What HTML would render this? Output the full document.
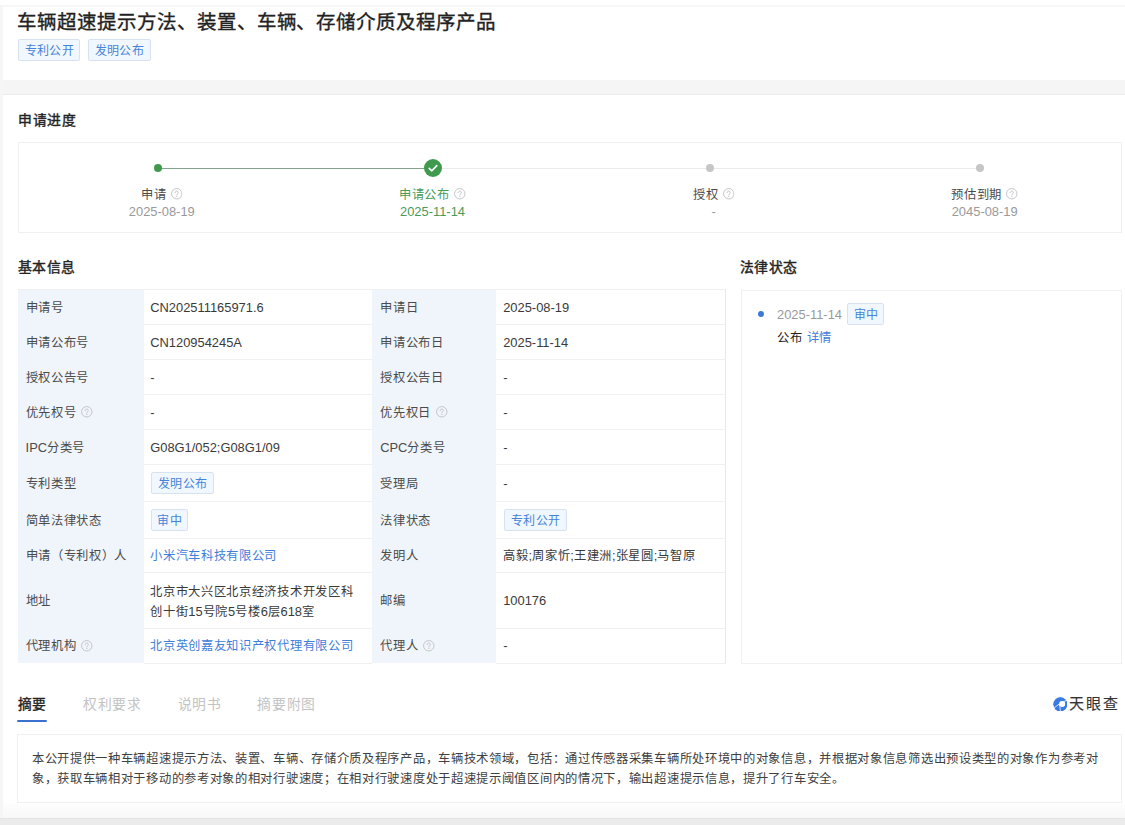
<!DOCTYPE html>
<html lang="zh-CN">
<head>
<meta charset="utf-8">
<title>车辆超速提示方法、装置、车辆、存储介质及程序产品</title>
<style>
*{margin:0;padding:0;box-sizing:border-box}
html,body{width:1125px;height:825px;overflow:hidden;background:#fff}
body{position:relative;font-family:"Liberation Sans",sans-serif;font-size:12.9px;color:#333}
.a{position:absolute;white-space:nowrap;line-height:16px}
.t{position:absolute;white-space:nowrap;line-height:16px}
.cj{font-size:12.3px;letter-spacing:0.7px}
.lt{font-size:12.9px;letter-spacing:0}
.strip-top{position:absolute;left:0;top:4.5px;width:1125px;height:2.5px;background:#f7f7f7}
.strip-left{position:absolute;left:0;top:4.5px;width:2.5px;height:821px;background:#f6f6f6}
.band{position:absolute;left:2.5px;top:80px;width:1123px;height:14.5px;background:#f5f5f5;border-bottom:1px solid #ebebeb}
.band-bot{position:absolute;left:0;top:817.5px;width:1125px;height:7.5px;background:#ebebeb;border-top:1px solid #e4e4e4}
.shade-bot{position:absolute;left:2.5px;top:803.5px;width:1123px;height:14px;background:linear-gradient(#fdfdfd,#f8f8f8)}
.title{font-size:19.5px;letter-spacing:-0.05px;font-weight:400;color:#222;line-height:24px;-webkit-text-stroke:0.35px #222}
.tag{position:absolute;height:21.4px;line-height:22.6px;text-align:center;border:1px solid #d8e2ef;background:#f1f7fe;color:#4583d8;border-radius:2px;font-size:12px;letter-spacing:0.35px;text-indent:0.35px;white-space:nowrap}
.h{font-size:13.8px;font-weight:400;color:#222;line-height:18px;letter-spacing:0.5px;-webkit-text-stroke:0.4px #222}
.box{position:absolute;border:1px solid #f0f0f0;background:#fff}
.dot{position:absolute;border-radius:50%}
.pl{position:absolute;height:1px}
.qi{position:absolute}
.lb{position:absolute;background:#f0f5fb}
.hl{position:absolute;height:1px;background:#f0f0f0}
.vl{position:absolute;width:1px;background:#e8e8e8}
.lbl{color:#4b4b4b}
.val{color:#3a3a3a}
.gray{color:#999}
.green{color:#4a9a59}
.link{color:#3f7ed8}
.tab{position:absolute;white-space:nowrap;font-size:13.8px;letter-spacing:0.7px;line-height:18px;color:#c3c3c3}
</style>
</head>
<body>
<div class="strip-top"></div>
<div class="strip-left"></div>
<div class="band"></div>
<div class="shade-bot"></div>
<div class="band-bot"></div>

<!-- title card -->
<div class="a title" style="left:17.2px;top:10.3px">车辆超速提示方法、装置、车辆、存储介质及程序产品</div>
<div class="tag" style="left:17.9px;top:39.3px;width:62.5px">专利公开</div>
<div class="tag" style="left:87.9px;top:39.3px;width:62.7px">发明公布</div>

<!-- progress -->
<div class="a h" style="left:18px;top:112px">申请进度</div>
<div class="box" style="left:17.5px;top:141.7px;width:1104.5px;height:91.8px"></div>
<div class="pl" style="left:157.5px;top:167.5px;width:276px;background:#86a38f"></div>
<div class="pl" style="left:433.6px;top:167.5px;width:546.4px;background:#eaeaea"></div>
<div class="dot" style="left:153.5px;top:164px;width:8px;height:8px;background:#3f9a4e"></div>
<div class="dot" style="left:705.6px;top:164px;width:8px;height:8px;background:#c6c6c6"></div>
<div class="dot" style="left:976px;top:164px;width:8px;height:8px;background:#c6c6c6"></div>
<svg style="position:absolute;left:424.2px;top:159px" width="18" height="18" viewBox="0 0 18 18"><circle cx="9" cy="9" r="9" fill="#3f9a4e"/><path d="M5.2 9.3 L7.9 11.8 L12.8 6.6" fill="none" stroke="#fff" stroke-width="1.6" stroke-linecap="round" stroke-linejoin="round"/></svg>
<div class="t lbl cj" style="left:141.10px;top:187.00px;">申请</div>
<svg class="qi" style="left:170.75px;top:188.05px" width="11.5" height="11.5" viewBox="0 0 23 23"><circle cx="11.5" cy="11.5" r="10.4" fill="none" stroke="#c3c5c9" stroke-width="2"/><path d="M8.4 9.3 C8.4 7.3 9.8 6.2 11.5 6.2 C13.3 6.2 14.6 7.4 14.6 9 C14.6 11.2 11.8 11.4 11.8 13.9" fill="none" stroke="#c3c5c9" stroke-width="2" stroke-linecap="round"/><circle cx="11.8" cy="16.8" r="1.25" fill="#c3c5c9"/></svg>
<div class="t gray" style="left:101.80px;top:204.10px;width:120px;text-align:center">2025-08-19</div>
<div class="t green cj" style="left:399.10px;top:187.00px;">申请公布</div>
<svg class="qi" style="left:454.15px;top:188.05px" width="11.5" height="11.5" viewBox="0 0 23 23"><circle cx="11.5" cy="11.5" r="10.4" fill="none" stroke="#c3c5c9" stroke-width="2"/><path d="M8.4 9.3 C8.4 7.3 9.8 6.2 11.5 6.2 C13.3 6.2 14.6 7.4 14.6 9 C14.6 11.2 11.8 11.4 11.8 13.9" fill="none" stroke="#c3c5c9" stroke-width="2" stroke-linecap="round"/><circle cx="11.8" cy="16.8" r="1.25" fill="#c3c5c9"/></svg>
<div class="t green" style="left:372.50px;top:204.10px;width:120px;text-align:center">2025-11-14</div>
<div class="t lbl cj" style="left:692.90px;top:187.00px;">授权</div>
<svg class="qi" style="left:722.55px;top:188.05px" width="11.5" height="11.5" viewBox="0 0 23 23"><circle cx="11.5" cy="11.5" r="10.4" fill="none" stroke="#c3c5c9" stroke-width="2"/><path d="M8.4 9.3 C8.4 7.3 9.8 6.2 11.5 6.2 C13.3 6.2 14.6 7.4 14.6 9 C14.6 11.2 11.8 11.4 11.8 13.9" fill="none" stroke="#c3c5c9" stroke-width="2" stroke-linecap="round"/><circle cx="11.8" cy="16.8" r="1.25" fill="#c3c5c9"/></svg>
<div class="t gray" style="left:653.60px;top:204.10px;width:120px;text-align:center">-</div>
<div class="t lbl cj" style="left:951.30px;top:187.00px;">预估到期</div>
<svg class="qi" style="left:1006.35px;top:188.05px" width="11.5" height="11.5" viewBox="0 0 23 23"><circle cx="11.5" cy="11.5" r="10.4" fill="none" stroke="#c3c5c9" stroke-width="2"/><path d="M8.4 9.3 C8.4 7.3 9.8 6.2 11.5 6.2 C13.3 6.2 14.6 7.4 14.6 9 C14.6 11.2 11.8 11.4 11.8 13.9" fill="none" stroke="#c3c5c9" stroke-width="2" stroke-linecap="round"/><circle cx="11.8" cy="16.8" r="1.25" fill="#c3c5c9"/></svg>
<div class="t gray" style="left:924.70px;top:204.10px;width:120px;text-align:center">2045-08-19</div>

<div class="a h" style="left:17.5px;top:259px">基本信息</div>
<div class="a h" style="left:739.7px;top:259px">法律状态</div>

<div class="lb" style="left:18.0px;top:289.2px;width:125.80px;height:373.80px"></div>
<div class="lb" style="left:372.0px;top:289.2px;width:124.00px;height:373.80px"></div>
<div class="hl" style="left:18.0px;top:288.70px;width:707.80px"></div>
<div class="vl" style="left:724.80px;top:289.2px;height:373.80px"></div>
<div class="hl" style="left:143.8px;top:324.10px;width:228.20px"></div>
<div class="hl" style="left:496.0px;top:324.10px;width:229.80px"></div>
<div class="hl" style="left:143.8px;top:359.00px;width:228.20px"></div>
<div class="hl" style="left:496.0px;top:359.00px;width:229.80px"></div>
<div class="hl" style="left:143.8px;top:394.10px;width:228.20px"></div>
<div class="hl" style="left:496.0px;top:394.10px;width:229.80px"></div>
<div class="hl" style="left:143.8px;top:429.10px;width:228.20px"></div>
<div class="hl" style="left:496.0px;top:429.10px;width:229.80px"></div>
<div class="hl" style="left:143.8px;top:463.70px;width:228.20px"></div>
<div class="hl" style="left:496.0px;top:463.70px;width:229.80px"></div>
<div class="hl" style="left:143.8px;top:501.00px;width:228.20px"></div>
<div class="hl" style="left:496.0px;top:501.00px;width:229.80px"></div>
<div class="hl" style="left:143.8px;top:537.60px;width:228.20px"></div>
<div class="hl" style="left:496.0px;top:537.60px;width:229.80px"></div>
<div class="hl" style="left:143.8px;top:572.30px;width:228.20px"></div>
<div class="hl" style="left:496.0px;top:572.30px;width:229.80px"></div>
<div class="hl" style="left:143.8px;top:628.00px;width:228.20px"></div>
<div class="hl" style="left:496.0px;top:628.00px;width:229.80px"></div>
<div class="hl" style="left:143.8px;top:662.50px;width:228.20px"></div>
<div class="hl" style="left:496.0px;top:662.50px;width:229.80px"></div>
<div class="t lbl cj" style="left:25.60px;top:299.60px;">申请号</div>
<div class="t val" style="left:150.20px;top:299.60px;">CN202511165971.6</div>
<div class="t lbl cj" style="left:380.20px;top:299.60px;">申请日</div>
<div class="t val" style="left:503.20px;top:299.60px;">2025-08-19</div>
<div class="t lbl cj" style="left:25.60px;top:334.75px;">申请公布号</div>
<div class="t val" style="left:150.20px;top:334.75px;">CN120954245A</div>
<div class="t lbl cj" style="left:380.20px;top:334.75px;">申请公布日</div>
<div class="t val" style="left:503.20px;top:334.75px;">2025-11-14</div>
<div class="t lbl cj" style="left:25.60px;top:369.75px;">授权公告号</div>
<div class="t val" style="left:150.20px;top:369.75px;">-</div>
<div class="t lbl cj" style="left:380.20px;top:369.75px;">授权公告日</div>
<div class="t val" style="left:503.20px;top:369.75px;">-</div>
<div class="t lbl cj" style="left:25.60px;top:404.80px;">优先权号</div>
<svg class="qi" style="left:81.45px;top:406.45px" width="11.5" height="11.5" viewBox="0 0 23 23"><circle cx="11.5" cy="11.5" r="10.4" fill="none" stroke="#c3c5c9" stroke-width="2"/><path d="M8.4 9.3 C8.4 7.3 9.8 6.2 11.5 6.2 C13.3 6.2 14.6 7.4 14.6 9 C14.6 11.2 11.8 11.4 11.8 13.9" fill="none" stroke="#c3c5c9" stroke-width="2" stroke-linecap="round"/><circle cx="11.8" cy="16.8" r="1.25" fill="#c3c5c9"/></svg>
<div class="t val" style="left:150.20px;top:404.80px;">-</div>
<div class="t lbl cj" style="left:380.20px;top:404.80px;">优先权日</div>
<svg class="qi" style="left:436.05px;top:406.45px" width="11.5" height="11.5" viewBox="0 0 23 23"><circle cx="11.5" cy="11.5" r="10.4" fill="none" stroke="#c3c5c9" stroke-width="2"/><path d="M8.4 9.3 C8.4 7.3 9.8 6.2 11.5 6.2 C13.3 6.2 14.6 7.4 14.6 9 C14.6 11.2 11.8 11.4 11.8 13.9" fill="none" stroke="#c3c5c9" stroke-width="2" stroke-linecap="round"/><circle cx="11.8" cy="16.8" r="1.25" fill="#c3c5c9"/></svg>
<div class="t val" style="left:503.20px;top:404.80px;">-</div>
<div class="t lbl cj" style="left:25.60px;top:439.60px;"><span class="lt">IPC</span>分类号</div>
<div class="t val" style="left:150.20px;top:439.60px;">G08G1/052;G08G1/09</div>
<div class="t lbl cj" style="left:380.20px;top:439.60px;"><span class="lt">CPC</span>分类号</div>
<div class="t val" style="left:503.20px;top:439.60px;">-</div>
<div class="t lbl cj" style="left:25.60px;top:475.55px;">专利类型</div>
<div class="tag" style="left:151.40px;top:472.25px;width:62.50px">发明公布</div>
<div class="t lbl cj" style="left:380.20px;top:475.55px;">受理局</div>
<div class="t val" style="left:503.20px;top:475.55px;">-</div>
<div class="t lbl cj" style="left:25.60px;top:512.50px;">简单法律状态</div>
<div class="tag" style="left:151.40px;top:509.20px;width:36.40px">审中</div>
<div class="t lbl cj" style="left:380.20px;top:512.50px;">法律状态</div>
<div class="tag" style="left:504.40px;top:509.20px;width:62.50px">专利公开</div>
<div class="t lbl cj" style="left:25.60px;top:548.15px;">申请（专利权）人</div>
<div class="t link cj" style="left:150.20px;top:548.15px;">小米汽车科技有限公司</div>
<div class="t lbl cj" style="left:380.20px;top:548.15px;">发明人</div>
<div class="t val cj" style="left:503.20px;top:548.15px;">高毅<span class="lt">;</span>周家忻<span class="lt">;</span>王建洲<span class="lt">;</span>张星圆<span class="lt">;</span>马智原</div>
<div class="t lbl cj" style="left:25.60px;top:593.35px;">地址</div>
<div class="t val cj" style="left:150.20px;top:581.75px;line-height:20px">北京市大兴区北京经济技术开发区科<br>创十街<span class="lt">15</span>号院<span class="lt">5</span>号楼<span class="lt">6</span>层<span class="lt">618</span>室</div>
<div class="t lbl cj" style="left:380.20px;top:593.35px;">邮编</div>
<div class="t val" style="left:503.20px;top:593.35px;">100176</div>
<div class="t lbl cj" style="left:25.60px;top:638.45px;">代理机构</div>
<svg class="qi" style="left:81.45px;top:640.10px" width="11.5" height="11.5" viewBox="0 0 23 23"><circle cx="11.5" cy="11.5" r="10.4" fill="none" stroke="#c3c5c9" stroke-width="2"/><path d="M8.4 9.3 C8.4 7.3 9.8 6.2 11.5 6.2 C13.3 6.2 14.6 7.4 14.6 9 C14.6 11.2 11.8 11.4 11.8 13.9" fill="none" stroke="#c3c5c9" stroke-width="2" stroke-linecap="round"/><circle cx="11.8" cy="16.8" r="1.25" fill="#c3c5c9"/></svg>
<div class="t link cj" style="left:150.20px;top:638.45px;">北京英创嘉友知识产权代理有限公司</div>
<div class="t lbl cj" style="left:380.20px;top:638.45px;">代理人</div>
<svg class="qi" style="left:423.35px;top:640.10px" width="11.5" height="11.5" viewBox="0 0 23 23"><circle cx="11.5" cy="11.5" r="10.4" fill="none" stroke="#c3c5c9" stroke-width="2"/><path d="M8.4 9.3 C8.4 7.3 9.8 6.2 11.5 6.2 C13.3 6.2 14.6 7.4 14.6 9 C14.6 11.2 11.8 11.4 11.8 13.9" fill="none" stroke="#c3c5c9" stroke-width="2" stroke-linecap="round"/><circle cx="11.8" cy="16.8" r="1.25" fill="#c3c5c9"/></svg>
<div class="t val" style="left:503.20px;top:638.45px;">-</div>

<div class="box" style="left:741.2px;top:289.5px;width:380.8px;height:374px;border-color:#f1f1f1"></div>
<div class="dot" style="left:758px;top:310.7px;width:6px;height:6px;background:#3b78d8"></div>
<div class="t gray" style="left:777.00px;top:307.00px;">2025-11-14</div>
<div class="tag" style="left:847.30px;top:303.30px;width:37.10px">审中</div>
<div class="t lbl cj" style="left:776.90px;top:330.30px;color:#222">公布</div>
<div class="t link cj" style="left:806.80px;top:330.30px;">详情</div>

<!-- tabs -->
<div class="tab" style="left:17.5px;top:695.7px;color:#222;-webkit-text-stroke:0.35px #222">摘要</div>
<div style="position:absolute;left:17.4px;top:720px;width:29.4px;height:2.2px;border-radius:1px;background:#3a70d2"></div>
<div class="tab" style="left:82.9px;top:695.7px">权利要求</div>
<div class="tab" style="left:177.8px;top:695.7px">说明书</div>
<div class="tab" style="left:257.2px;top:695.7px">摘要附图</div>

<svg style="position:absolute;left:1052.7px;top:696.8px" width="14.6" height="14.6" viewBox="0 0 30 30">
<defs><clipPath id="lc"><circle cx="15" cy="15" r="14.8"/></clipPath></defs>
<g clip-path="url(#lc)">
<circle cx="15" cy="15" r="14.8" fill="#3a7be0"/>
<circle cx="18.8" cy="14.6" r="6.2" fill="#fff"/>
<path d="M1 24 C9 16 19 10 31 6" fill="none" stroke="#fff" stroke-width="1.7"/>
<path d="M12.6 15 C14.5 20 15 25 15.2 31" fill="none" stroke="#fff" stroke-width="1.5"/>
</g></svg>
<div style="position:absolute;left:1068.5px;top:694.5px;font-size:15px;line-height:18px;font-weight:400;color:#333;white-space:nowrap;letter-spacing:2.2px;-webkit-text-stroke:0.15px #3a3a3a">天眼查</div>

<div class="box" style="left:17.4px;top:734.4px;width:1104.6px;height:69px"></div>
<div class="t cj" style="left:31.9px;top:748.8px;line-height:20.5px;white-space:normal;width:1075px;color:#404040">本公开提供一种车辆超速提示方法、装置、车辆、存储介质及程序产品，车辆技术领域，包括：通过传感器采集车辆所处环境中的对象信息，并根据对象信息筛选出预设类型的对象作为参考对象，获取车辆相对于移动的参考对象的相对行驶速度；在相对行驶速度处于超速提示阈值区间内的情况下，输出超速提示信息，提升了行车安全。</div>

</body>
</html>
